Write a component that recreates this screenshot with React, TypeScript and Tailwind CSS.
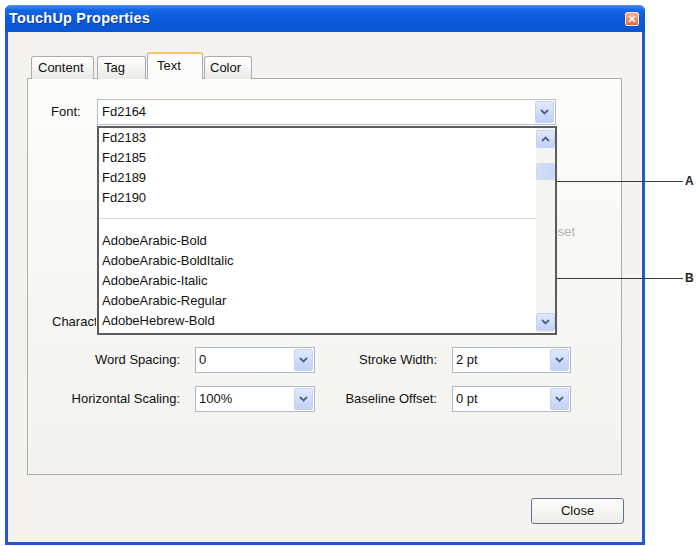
import React from 'react';

const Chevron = ({ up = false }: { up?: boolean }) => (
  <svg width="9" height="6" viewBox="0 0 9 6">
    <path d={up ? 'M1 5 L4.5 1.5 L8 5' : 'M1 1 L4.5 4.5 L8 1'} stroke="#4d6185" strokeWidth="1.8" fill="none" />
  </svg>
);

const ArrowButton = ({ up = false, className = '' }: { up?: boolean; className?: string }) => (
  <div className={`w-[19px] bg-gradient-to-b from-[#e2eafc] to-[#bfd1f6] border border-[#c3d3f4] rounded-[2px] flex items-center justify-center ${className}`}>
    <Chevron up={up} />
  </div>
);

const Select = ({ value, w }: { value: string; w: string }) => (
  <div className={`${w} h-[26px] border border-[#a9b9cf] bg-white flex`}>
    <span className="flex-1 pl-[3px] flex items-center">{value}</span>
    <ArrowButton className="m-px" />
  </div>
);

const fontsTop = ['Fd2183', 'Fd2185', 'Fd2189', 'Fd2190'];
const fontsBottom = ['AdobeArabic-Bold', 'AdobeArabic-BoldItalic', 'AdobeArabic-Italic', 'AdobeArabic-Regular', 'AdobeHebrew-Bold'];

const tabs = [
  { label: 'Content', w: 'w-[63px]', pl: 'pl-[6px]', ml: '' },
  { label: 'Tag', w: 'w-[49px]', pl: 'pl-[6px]', ml: 'ml-[3px]' },
  { label: 'Text', w: 'w-[56px]', pl: 'pl-[9px]', ml: 'ml-px', active: true },
  { label: 'Color', w: 'w-[48px]', pl: 'pl-[5px]', ml: 'ml-px' },
];

export default function App() {
  return (
    <div className="relative w-[696px] h-[546px] bg-white overflow-hidden text-[13px] text-[#111] font-['Liberation_Sans',Arial,sans-serif]">
      {/* window */}
      <div className="ml-[5px] mt-[5px] w-[640px] h-[540px] flex flex-col bg-[#2358cf] rounded-t-[6px]">
        <div className="h-[27px] flex items-center justify-between pl-[4px] pr-[6px] rounded-t-[6px] bg-[linear-gradient(to_bottom,#4a95f5_0%,#1466e6_18%,#0a5adb_55%,#0a56d2_100%)]">
          <span className="text-white font-bold text-[14.5px] tracking-[0.2px] [text-shadow:1px_1px_0_#0b3a9c]">TouchUp Properties</span>
          <div className="w-[14px] h-[14px] rounded-[2px] border border-[#fbe3d8] bg-gradient-to-b from-[#f6b293] to-[#e2693f] flex items-center justify-center">
            <svg width="8" height="8" viewBox="0 0 8 8">
              <path d="M1 1 L7 7 M7 1 L1 7" stroke="white" strokeWidth="1.6" />
            </svg>
          </div>
        </div>

        <div className="flex-1 mx-[3px] mb-[3px] bg-[#f4f3ef] pl-[19px] pr-[20px] pt-[20px] flex flex-col">
          {/* tabs */}
          <div className="flex items-end h-[27px] pl-[4px] -mb-px relative z-10">
            {tabs.map(t =>
              t.active ? (
                <div key={t.label} className={`${t.w} ${t.ml} h-[27px] bg-[#fcfcfb] border-x border-[#a7adb0] border-t-[2px] border-t-[#f5c46a] rounded-t-[3px] ${t.pl} pt-[2px]`}>
                  {t.label}
                </div>
              ) : (
                <div key={t.label} className={`${t.w} ${t.ml} h-[23px] border border-b-0 border-[#a7adb0] rounded-t-[3px] bg-gradient-to-b from-white to-[#ebeae5] ${t.pl} flex items-center`}>
                  {t.label}
                </div>
              )
            )}
          </div>

          {/* panel */}
          <div className="relative h-[397px] border border-[#a9adb0] bg-gradient-to-b from-[#fcfcfb] to-[#f3f2ee] pt-[20px]">
            <div className="flex items-center h-[26px] pl-[23px]">
              <span className="w-[46px]">Font:</span>
              <div className="w-[459px] h-[26px] border border-[#b3bfcf] bg-white flex">
                <span className="flex-1 pl-[4px] flex items-center">Fd2164</span>
                <ArrowButton className="m-px" />
              </div>
            </div>

            {/* fields hidden under the open list */}
            <div className="h-[222px] flex flex-col">
              <div className="mt-[98px] h-[18px] flex justify-end pr-[46px] items-center text-[#b5b3aa]">
                <span className="w-[22px] overflow-hidden whitespace-nowrap flex justify-end">Subset</span>
              </div>
              <div className="mt-[72px] h-[18px] pl-[24px] flex items-center">
                <span className="w-[44px] overflow-hidden whitespace-nowrap">Character Spacing:</span>
              </div>
            </div>

            <div className="flex items-center h-[26px]">
              <span className="w-[152px] text-right">Word Spacing:</span>
              <div className="ml-[15px]"><Select value="0" w="w-[120px]" /></div>
              <span className="w-[122px] text-right">Stroke Width:</span>
              <div className="ml-[15px]"><Select value="2 pt" w="w-[119px]" /></div>
            </div>
            <div className="flex items-center h-[26px] mt-[13px]">
              <span className="w-[152px] text-right">Horizontal Scaling:</span>
              <div className="ml-[15px]"><Select value="100%" w="w-[120px]" /></div>
              <span className="w-[122px] text-right">Baseline Offset:</span>
              <div className="ml-[15px]"><Select value="0 pt" w="w-[119px]" /></div>
            </div>

            {/* open font list */}
            <div className="absolute left-[69px] top-[47px] w-[460px] h-[209px] border-2 border-[#5c5c5c] bg-white flex z-20">
              <div className="flex-1 flex flex-col pl-[3px]">
                {fontsTop.map(f => (
                  <div key={f} className="h-[20px] flex items-center">{f}</div>
                ))}
                <div className="h-[23px] flex flex-col">
                  <div className="mt-[10px] h-px bg-[#dcdcdc] -ml-[3px]" />
                </div>
                {fontsBottom.map(f => (
                  <div key={f} className="h-[20px] flex items-center">{f}</div>
                ))}
              </div>
              <div className="w-[19px] bg-[#f4f4f1] flex flex-col justify-between py-[2px]">
                <div className="flex flex-col">
                  <ArrowButton up className="h-[18px]" />
                  <div className="mt-[15px] h-[17px] w-[19px] rounded-[2px] bg-gradient-to-r from-[#d3dff7] to-[#c6d5f3] border border-[#cfdbf4]" />
                </div>
                <ArrowButton className="h-[18px]" />
              </div>
            </div>
          </div>

          <div className="mt-[23px] flex justify-end -mr-[2px]">
            <div className="w-[93px] h-[26px] rounded-[3px] border border-[#5e7394] bg-gradient-to-b from-white to-[#ecebe6] flex items-center justify-center">
              Close
            </div>
          </div>
        </div>
      </div>

      {/* callouts */}
      <div className="absolute left-[330px] top-[181px] w-[353px] h-px bg-[#3a3a3a]" />
      <span className="absolute left-[685px] top-[174px] text-[12px] font-bold leading-[14px] text-[#222]">A</span>
      <div className="absolute left-[330px] top-[278px] w-[353px] h-px bg-[#3a3a3a]" />
      <span className="absolute left-[685px] top-[271px] text-[12px] font-bold leading-[14px] text-[#222]">B</span>
    </div>
  );
}
